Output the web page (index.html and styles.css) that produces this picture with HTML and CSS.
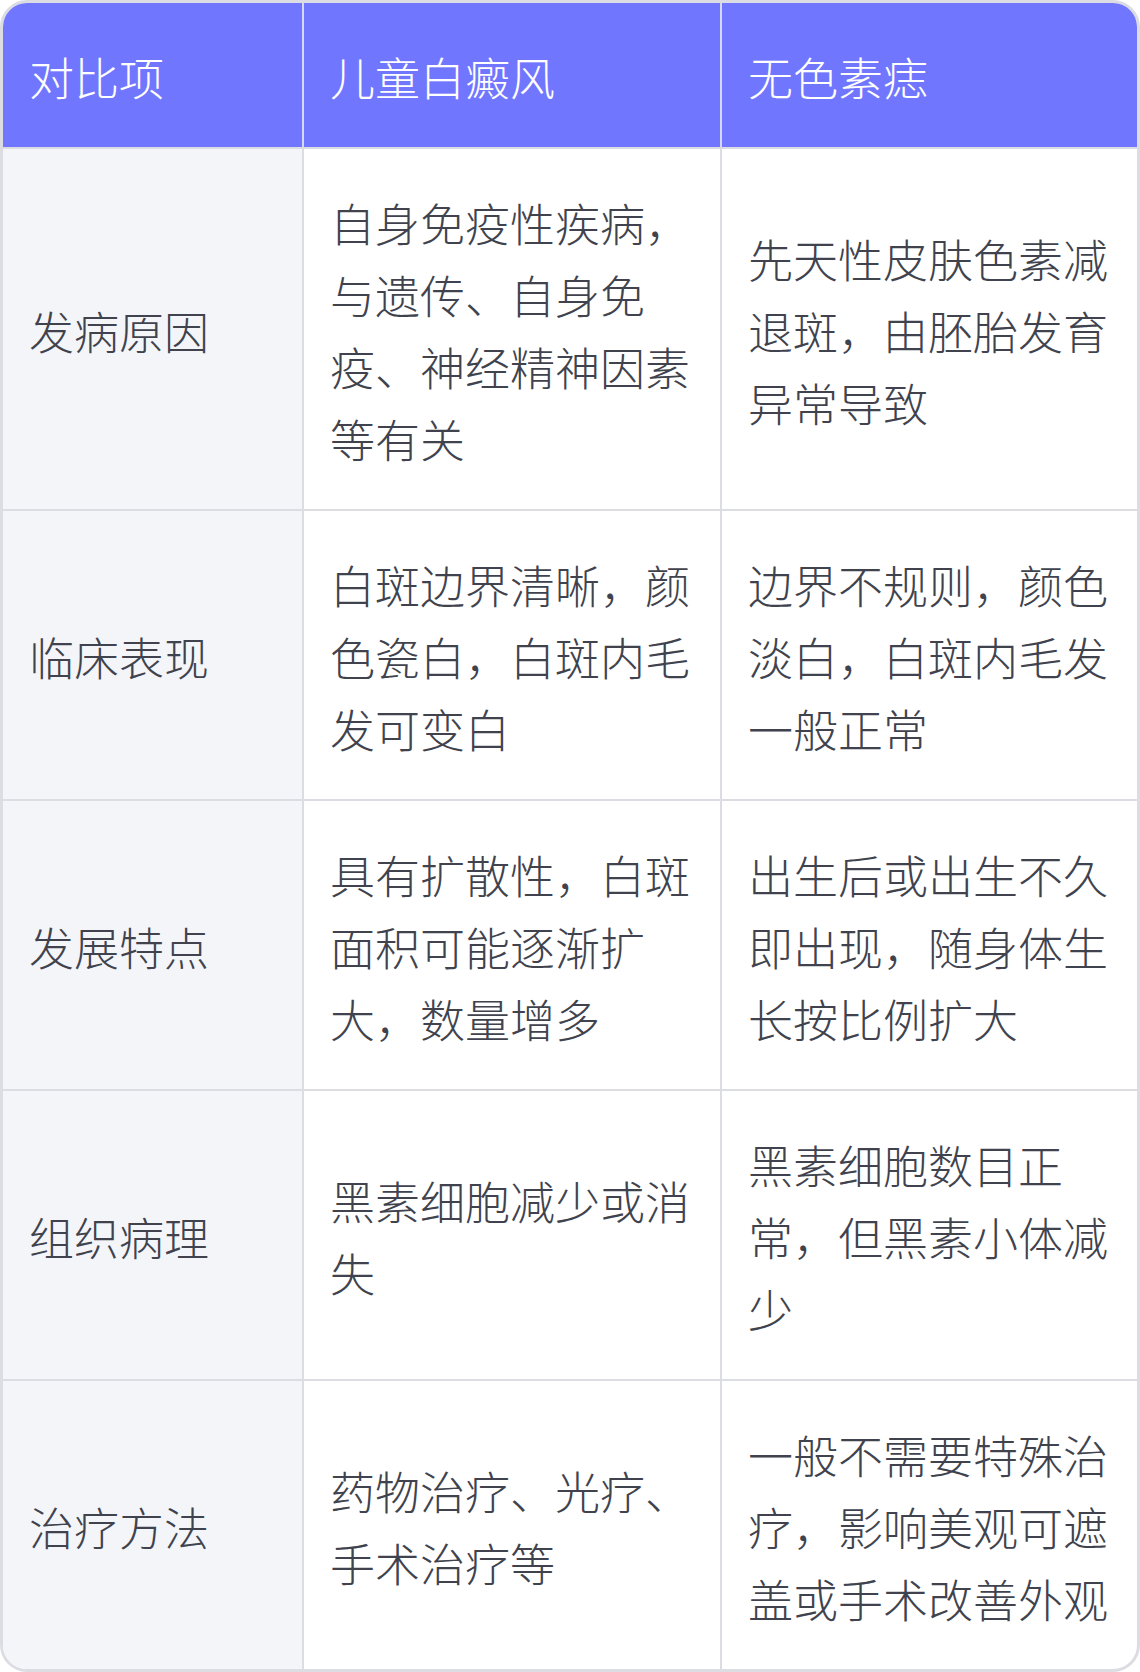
FILE: index.html
```html
<!DOCTYPE html>
<html lang="zh-CN">
<head>
<meta charset="utf-8">
<title>儿童白癜风与无色素痣对比</title>
<link rel="stylesheet" href="styles.css">
</head>
<body>
<table class="compare">
  <colgroup>
    <col class="c-item">
    <col class="c-a">
    <col class="c-b">
  </colgroup>
  <thead>
    <tr>
      <th>对比项</th>
      <th>儿童白癜风</th>
      <th>无色素痣</th>
    </tr>
  </thead>
  <tbody>
    <tr>
      <td class="label">发病原因</td>
      <td>自身免疫性疾病，与遗传、自身免疫、神经精神因素等有关</td>
      <td>先天性皮肤色素减退斑，由胚胎发育异常导致</td>
    </tr>
    <tr>
      <td class="label">临床表现</td>
      <td>白斑边界清晰，颜色瓷白，白斑内毛发可变白</td>
      <td>边界不规则，颜色淡白，白斑内毛发一般正常</td>
    </tr>
    <tr>
      <td class="label">发展特点</td>
      <td>具有扩散性，白斑面积可能逐渐扩大，数量增多</td>
      <td>出生后或出生不久即出现，随身体生长按比例扩大</td>
    </tr>
    <tr>
      <td class="label">组织病理</td>
      <td>黑素细胞减少或消失</td>
      <td>黑素细胞数目正常，但黑素小体减少</td>
    </tr>
    <tr>
      <td class="label">治疗方法</td>
      <td>药物治疗、光疗、手术治疗等</td>
      <td>一般不需要特殊治疗，影响美观可遮盖或手术改善外观</td>
    </tr>
  </tbody>
</table>
</body>
</html>
```

FILE: styles.css
```css
html, body {
  margin: 0;
  padding: 0;
  background: #ffffff;
}

.compare {
  width: 1140px;
  table-layout: fixed;
  border-collapse: separate;
  border-spacing: 0;
  border: 3px solid #dcdde3;
  border-radius: 27px;
  overflow: hidden;
  font-family: "Noto Sans CJK SC", "Noto Sans", sans-serif;
  font-weight: 300;
  font-size: 45px;
  line-height: 72px;
  color: #40434d;
}

.c-item { width: 301px; }
.c-a { width: 418px; }
.c-b { width: 415px; }

.compare th,
.compare td {
  padding: 38px 24px 34px 26px;
  text-align: left;
  vertical-align: middle;
  border-right: 2px solid #dcdde3;
  border-bottom: 2px solid #dcdde3;
  font-weight: 300;
}

.compare th:last-child,
.compare td:last-child {
  border-right: none;
}

.compare tbody tr:last-child td {
  border-bottom: none;
}

.compare th {
  background: #7176ff;
  color: #ffffff;
  border-right-color: #d6d8ee;
  border-bottom-color: #dcdde3;
}

.compare td.label {
  background: #f4f5f9;
}
```
